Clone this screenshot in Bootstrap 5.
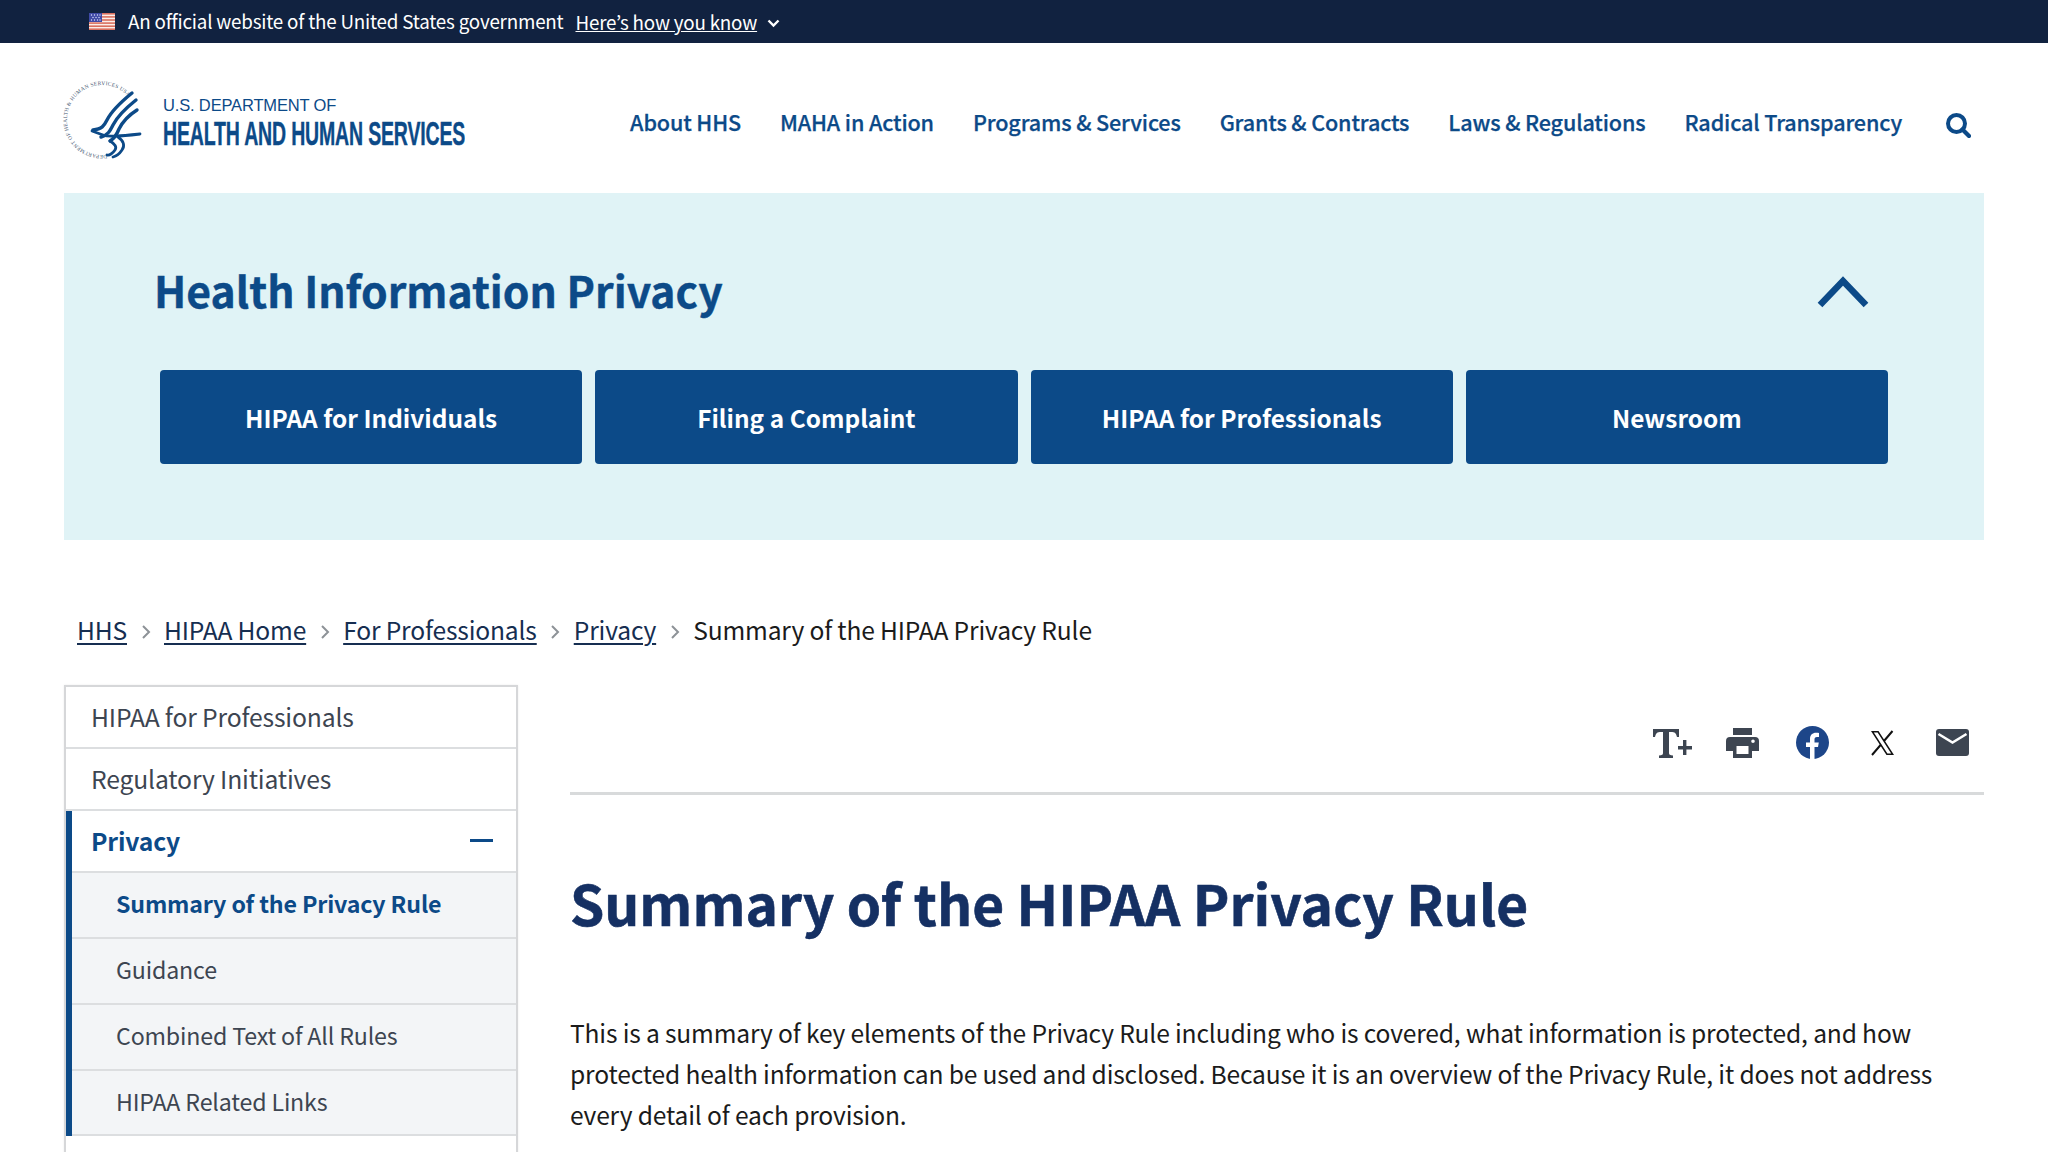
<!doctype html>
<html lang="en">
<head>
<meta charset="utf-8">
<title>Summary of the HIPAA Privacy Rule</title>
<link href="https://cdn.jsdelivr.net/npm/bootstrap@5.3.0/dist/css/bootstrap.min.css" rel="stylesheet">
<style>
:root{--hhs-blue:#0c4a88;--hhs-navy:#162e51;--ink:#1b1b1b;--src:"Noto Sans CJK JP","Noto Sans","Liberation Sans",sans-serif;}
html,body{height:100vh;overflow:hidden}
body{font-family:var(--src);color:var(--ink);font-size:24.6px;letter-spacing:-.16px;line-height:41px;font-feature-settings:"pwid";}
.gov-strip{height:43px;background:#112240;color:#fff;font-size:18.8px;letter-spacing:-.2px;padding-left:89px;line-height:1}
.gov-strip a{color:#fff;margin-left:12px;padding-top:2px}
.gov-strip svg.chev{margin-left:10px;margin-top:4px}
.gov-msg{margin-left:13px}
.site-head{height:150px;padding:0 64px 0 55px}
.brand-mark{width:100px;height:96px;flex:none;margin-top:3px}
.brand-words{width:302px;height:62px;margin-left:8px;margin-top:12px;flex:none}
.main-links{gap:39px;margin-left:auto;margin-right:44px;margin-top:8px}
.main-links a{color:var(--hhs-blue);font-weight:500;font-size:21.6px;letter-spacing:-.15px;-webkit-text-stroke:.25px var(--hhs-blue);text-decoration:none;line-height:1.2}
.search-btn{width:25px;height:25px;margin-right:13px;margin-top:14px;flex:none}
.topic-band{margin:0 64px;height:347px;background:#e0f3f6;padding:64px 96px 0}
.topic-head{height:70px;margin-left:-6px;padding-right:19px}
.topic-head h2{color:var(--hhs-blue);font-weight:700;font-size:42.7px;line-height:64px;letter-spacing:0;-webkit-text-stroke:.4px var(--hhs-blue);margin:0 0 6px}
.topic-btns{gap:13px;margin-top:43px}
.topic-btns a{flex:1 1 0;height:94px;background:var(--hhs-blue);color:#fff;border-radius:4px;font-weight:700;font-size:24.4px;letter-spacing:0;text-decoration:none}
.crumbs{margin:0 64px;padding:69px 0 0 13px;height:145px}
.crumb-line{height:40px;line-height:40px}
.crumb-line a{color:var(--hhs-navy);text-decoration:underline;text-underline-offset:3px;text-decoration-thickness:2px}
.crumb-line svg{margin:5px 13.5px 0;flex:none}
.page-cols{margin:0 64px;gap:52px}
.side-list{width:454px;flex:none;border:2px solid #d6d7d9;border-bottom:0;box-shadow:0 0 2px rgba(0,0,0,.08)}
.side-row{height:62px;border-bottom:2px solid #dcdee0;padding-left:25px;padding-bottom:1px;color:#3d4551;font-size:24.7px;line-height:1}
.side-open{border-left:6px solid var(--hhs-blue)}
.side-open .side-row{padding-left:19px}
.side-open .side-row.is-open{color:var(--hhs-blue);font-weight:700;padding-right:23px}
.side-open .side-sub{height:66px;background:#f3f5f7;padding-left:44px;padding-bottom:2px;font-size:23.2px}
.side-open .side-sub:last-child{height:65px}
.side-sub.is-current{color:var(--hhs-blue);font-weight:700}
.side-dash{width:23px;height:3px;background:var(--hhs-blue);display:block}
.doc-col{flex:1 1 0;min-width:0}
.doc-tools{height:110px;border-bottom:3px solid #d8dadb;padding:41px 12px 0 0;gap:30px}
.tool-cell{width:40px;height:33px}
.doc-title{color:#153063;font-weight:700;font-size:55px;letter-spacing:0;-webkit-text-stroke:.6px #153063;line-height:80px;margin:67px 0 0}
.doc-lead{margin:70px 0 0;line-height:41px}
</style>
</head>
<body>
<div class="gov-strip d-flex align-items-center">
  <svg width="26" height="17" viewBox="0 0 26 17" role="img" aria-label="U.S. flag"><rect width="26" height="17" fill="#fbeee9"/><g fill="#d9705f"><rect width="26" height="1.6"/><rect y="3.1" width="26" height="1.6"/><rect y="6.2" width="26" height="1.6"/><rect y="9.3" width="26" height="1.6"/><rect y="12.4" width="26" height="1.6"/><rect y="15.4" width="26" height="1.6"/></g><rect width="13" height="9" fill="#3f4aa6"/><g fill="#dfe3ff"><circle cx="2.5" cy="2" r=".7"/><circle cx="5.5" cy="2" r=".7"/><circle cx="8.5" cy="2" r=".7"/><circle cx="11" cy="2" r=".7"/><circle cx="4" cy="4.5" r=".7"/><circle cx="7" cy="4.5" r=".7"/><circle cx="10" cy="4.5" r=".7"/><circle cx="2.5" cy="7" r=".7"/><circle cx="5.5" cy="7" r=".7"/><circle cx="8.5" cy="7" r=".7"/><circle cx="11" cy="7" r=".7"/></g></svg>
  <span class="gov-msg">An official website of the United States government</span>
  <a href="#">Here’s how you know</a>
  <svg class="chev" width="13" height="9" viewBox="0 0 13 9"><path d="M1.5 1.5 6.5 6.5 11.5 1.5" fill="none" stroke="#fff" stroke-width="2.4"/></svg>
</div>

<header class="site-head d-flex align-items-center">
  <svg class="brand-mark" viewBox="0 0 100 96" role="img" aria-label="HHS seal">
    <defs><path id="sealArc" d="M52 82.600A35 35 0 1 1 72 23.500"/></defs>
    <text font-family="Liberation Serif,serif" font-size="5.400" fill="#3f5670" letter-spacing=".3"><textPath href="#sealArc">DEPARTMENT OF HEALTH &amp; HUMAN SERVICES USA</textPath></text>
    <g fill="none" stroke="#0c4a88" stroke-linecap="round" stroke-linejoin="round">
      <path d="M77 21C66 30 57 38 52 48C49 54 47 57 38 58" stroke-width="3.400"/>
      <path d="M81 28C71 36 63 43 58 53C55 59 53 63 46 65" stroke-width="3.400"/>
      <path d="M82 38C74 43 68 49 64 57C62 62 60 66 55 69" stroke-width="3.400"/>
      <path d="M37 59 48 63C53 65 58 64 62 64C67 64 76 63 85 62" stroke-width="2.800"/>
      <path d="M55 69C60 72 62 75 60 78C58 81 54 84 52 83" stroke-width="2.800"/>
      <path d="M63 65C69 69 70 74 67 78C65 81 62 84 58 85" stroke-width="2.800"/>
    </g>
  </svg>
  <svg class="brand-words" viewBox="0 0 302 62" role="img" aria-label="U.S. Department of Health and Human Services">
    <text x="0" y="18" font-family="Liberation Sans,sans-serif" font-size="16.500" fill="#0c4a88">U.S. DEPARTMENT OF</text>
    <text transform="translate(0 52) scale(1 1.720)" font-family="Liberation Sans,sans-serif" font-weight="700" font-size="19.500" fill="#0c4a88" stroke="#0c4a88" stroke-width=".25">HEALTH AND HUMAN SERVICES</text>
  </svg>
  <nav class="main-links d-flex align-items-center">
    <a href="#">About HHS</a><a href="#">MAHA in Action</a><a href="#">Programs &amp; Services</a><a href="#">Grants &amp; Contracts</a><a href="#">Laws &amp; Regulations</a><a href="#">Radical Transparency</a>
  </nav>
  <svg class="search-btn" viewBox="0 0 25 25" role="img" aria-label="Search"><circle cx="10.500" cy="10.500" r="8.500" fill="none" stroke="#0c4a88" stroke-width="4"/><path d="M16.500 16.500 23 23" stroke="#0c4a88" stroke-width="4.200" stroke-linecap="round"/></svg>
</header>

<section class="topic-band">
  <div class="topic-head d-flex align-items-center justify-content-between">
    <h2>Health Information Privacy</h2>
    <svg width="52" height="32" viewBox="0 0 52 32"><path d="M3 29 26 5 49 29" fill="none" stroke="#0c4a88" stroke-width="6.500"/></svg>
  </div>
  <div class="topic-btns d-flex">
    <a href="#" class="d-flex align-items-center justify-content-center">HIPAA for Individuals</a>
    <a href="#" class="d-flex align-items-center justify-content-center">Filing a Complaint</a>
    <a href="#" class="d-flex align-items-center justify-content-center">HIPAA for Professionals</a>
    <a href="#" class="d-flex align-items-center justify-content-center">Newsroom</a>
  </div>
</section>

<nav class="crumbs">
  <div class="crumb-line d-flex align-items-center">
  <a href="#">HHS</a><svg width="10" height="16" viewBox="0 0 10 16"><path d="M2 2 8 8 2 14" fill="none" stroke="#8d9297" stroke-width="2"/></svg>
  <a href="#">HIPAA Home</a><svg width="10" height="16" viewBox="0 0 10 16"><path d="M2 2 8 8 2 14" fill="none" stroke="#8d9297" stroke-width="2"/></svg>
  <a href="#">For Professionals</a><svg width="10" height="16" viewBox="0 0 10 16"><path d="M2 2 8 8 2 14" fill="none" stroke="#8d9297" stroke-width="2"/></svg>
  <a href="#">Privacy</a><svg width="10" height="16" viewBox="0 0 10 16"><path d="M2 2 8 8 2 14" fill="none" stroke="#8d9297" stroke-width="2"/></svg>
  <span>Summary of the HIPAA Privacy Rule</span>
  </div>
</nav>

<div class="page-cols d-flex align-items-start">
  <aside class="side-list">
    <div class="side-row d-flex align-items-center">HIPAA for Professionals</div>
    <div class="side-row d-flex align-items-center">Regulatory Initiatives</div>
    <div class="side-open">
      <div class="side-row is-open d-flex align-items-center justify-content-between">Privacy<span class="side-dash"></span></div>
      <div class="side-row side-sub is-current d-flex align-items-center">Summary of the Privacy Rule</div>
      <div class="side-row side-sub d-flex align-items-center">Guidance</div>
      <div class="side-row side-sub d-flex align-items-center">Combined Text of All Rules</div>
      <div class="side-row side-sub d-flex align-items-center">HIPAA Related Links</div>
    </div>
    <div class="side-row">&nbsp;</div>
  </aside>
  <main class="doc-col">
    <div class="doc-tools d-flex justify-content-end align-items-start">
      <span class="tool-cell d-flex align-items-center justify-content-center"><svg width="40" height="32" viewBox="0 0 40 32" role="img" aria-label="Text size"><path d="M1 2H27V10H25C24 6 23 5 19 5H17V26C17 28 18 28 21 28.500V31H7V28.500C10 28 11 28 11 26V5H9C5 5 4 6 3 10H1Z" fill="#3d4551"/><path d="M31 13H34.400V19H40V22.400H34.400V28H31V22.400H26V19H31Z" fill="#3d4551"/></svg></span>
      <span class="tool-cell d-flex align-items-center justify-content-center"><svg width="33" height="30" viewBox="0 0 33 30" role="img" aria-label="Print"><path d="M7 0H26V7H7ZM4 9H29A4 4 0 0 1 33 13V23H26V30H7V23H0V13A4 4 0 0 1 4 9ZM10.500 18V26H22.500V18ZM27 11.500A1.800 1.800 0 1 0 27 15.100A1.800 1.800 0 1 0 27 11.500Z" fill="#3d4551" fill-rule="evenodd"/></svg></span>
      <span class="tool-cell d-flex align-items-center justify-content-center"><svg width="33" height="33" viewBox="0 0 33 33" role="img" aria-label="Facebook"><circle cx="16.500" cy="16.500" r="16.500" fill="#1d4689"/><path d="M14 33V21H10V16.500H14V13C14 9 16.500 6.800 20 6.800C21.700 6.800 23 7 23 7V11H21C19 11 18.500 12 18.500 13.300V16.500H22.800L22 21H18.500V33Z" fill="#fff"/></svg></span>
      <span class="tool-cell d-flex align-items-center justify-content-center"><svg width="25" height="26" viewBox="0 0 25 26" role="img" aria-label="X"><path d="M1 1H8.500L24 25H16.500ZM3.800 2.500 17.400 23.500H21.200L7.600 2.500Z" fill="#111" fill-rule="evenodd"/><path d="M22.500 1 14 11M11 14.500 2 25" stroke="#111" stroke-width="2"/></svg></span>
      <span class="tool-cell d-flex align-items-center justify-content-center"><svg width="33" height="27" viewBox="0 0 33 27" role="img" aria-label="Email"><rect width="33" height="27" rx="3" fill="#3d4551"/><path d="M2.500 5 16.500 13.500 30.500 5" fill="none" stroke="#fff" stroke-width="2.600"/></svg></span>
    </div>
    <h1 class="doc-title">Summary of the HIPAA Privacy Rule</h1>
    <p class="doc-lead">This is a summary of key elements of the Privacy Rule including who is covered, what information is protected, and how protected health information can be used and disclosed. Because it is an overview of the Privacy Rule, it does not address every detail of each provision.</p>
  </main>
</div>
<script src="https://cdn.jsdelivr.net/npm/bootstrap@5.3.0/dist/js/bootstrap.bundle.min.js"></script>
</body>
</html>
